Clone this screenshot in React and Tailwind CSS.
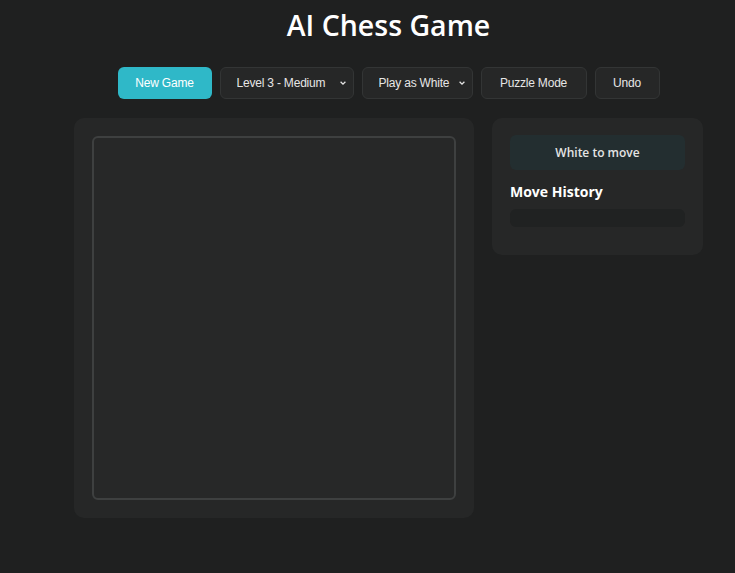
import React, { useState } from 'react';

const btn =
  'h-8 shrink-0 whitespace-nowrap rounded-md border border-[#333535] bg-[#262727] text-[12px] tracking-[-0.2px] text-[#e6e6e6]';

const Chevron = () => (
  <svg
    className="pointer-events-none absolute right-[7px] top-1/2 -translate-y-1/2"
    width="8"
    height="8"
    viewBox="0 0 10 10"
    fill="none"
    stroke="#e6e6e6"
    strokeWidth="1.6"
  >
    <path d="M2 3.5 L5 6.5 L8 3.5" />
  </svg>
);

const App = () => {
  const [level, setLevel] = useState('3');
  const [side, setSide] = useState('white');

  return (
    <div className="min-h-[573px] bg-[#1f2020] pl-[74px] pr-[32px] pt-[6px] font-['Liberation_Sans',Arial,sans-serif]">
      {/* Title */}
      <h1 className="text-center font-['Open_Sans',sans-serif] text-[28.5px] font-semibold leading-[38px] text-white">
        AI Chess Game
      </h1>

      {/* Controls */}
      <div className="mt-[23px] flex justify-center gap-2">
        <button className="h-8 w-[94px] rounded-md bg-[#2fb8c8] text-[12px] tracking-[-0.2px] text-white">
          New Game
        </button>
        <div className="relative">
          <select
            value={level}
            onChange={(e) => setLevel(e.target.value)}
            className={btn + ' w-[134px] appearance-none pl-[16px] pr-5'}
          >
            <option value="1">Level 1 - Beginner</option>
            <option value="2">Level 2 - Easy</option>
            <option value="3">Level 3 - Medium</option>
            <option value="4">Level 4 - Hard</option>
          </select>
          <Chevron />
        </div>
        <div className="relative">
          <select
            value={side}
            onChange={(e) => setSide(e.target.value)}
            className={btn + ' w-[111px] appearance-none pl-[16px] pr-5'}
          >
            <option value="white">Play as White</option>
            <option value="black">Play as Black</option>
          </select>
          <Chevron />
        </div>
        <button className={btn + ' w-[106px]'}>Puzzle Mode</button>
        <button className={btn + ' w-[65px]'}>Undo</button>
      </div>

      {/* Main */}
      <div className="mt-[19px] flex items-start gap-[18px]">
        <div className="rounded-[10px] bg-[#262727] p-[18px]">
          <div className="h-[364px] w-[364px] rounded-md border-2 border-[#3e4040] bg-[#272828]"></div>
        </div>

        <div className="w-[211px] rounded-[10px] bg-[#262727] px-[18px] pb-[28px] pt-[17px]">
          <div className="flex h-[35px] items-center justify-center rounded-md bg-[#232e30] font-['Open_Sans',sans-serif] text-[12px] font-semibold text-[#e4e4e4]">
            White to move
          </div>
          <h2 className="mt-[12px] font-['Open_Sans',sans-serif] text-[14px] font-bold leading-[20px] text-white">
            Move History
          </h2>
          <div className="mt-[7px] h-[18px] rounded-md bg-[#202222]"></div>
        </div>
      </div>
    </div>
  );
};

export default App;
